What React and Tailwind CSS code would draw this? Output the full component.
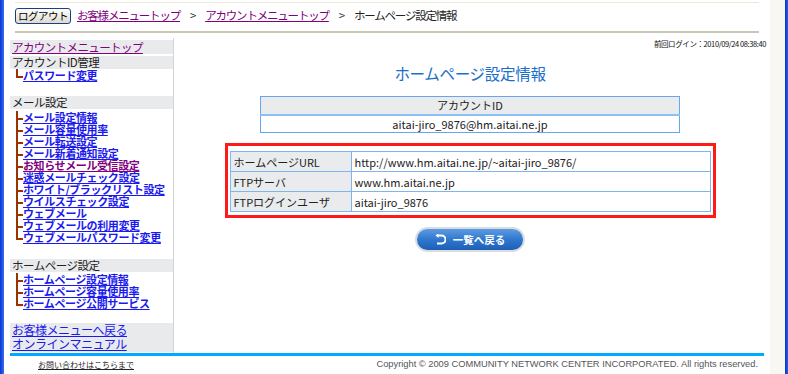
import React from 'react';

const mailItems = [
  { label: 'メール設定情報' },
  { label: 'メール容量使用率' },
  { label: 'メール転送設定' },
  { label: 'メール新着通知設定' },
  { label: 'お知らせメール受信設定', visited: true },
  { label: '迷惑メールチェック設定' },
  { label: 'ホワイト/ブラックリスト設定' },
  { label: 'ウイルスチェック設定' },
  { label: 'ウェブメール' },
  { label: 'ウェブメールの利用変更' },
  { label: 'ウェブメールパスワード変更' },
];

const homeItems = [
  { label: 'ホームページ設定情報' },
  { label: 'ホームページ容量使用率' },
  { label: 'ホームページ公開サービス' },
];

const infoRows = [
  ['ホームページURL', 'http://www.hm.aitai.ne.jp/~aitai-jiro_9876/'],
  ['FTPサーバ', 'www.hm.aitai.ne.jp'],
  ['FTPログインユーザ', 'aitai-jiro_9876'],
];

// tree connector glyph in front of each menu link
function Branch({ last }) {
  return (
    <svg width="12" height="12" viewBox="0 0 12 12" className="shrink-0">
      <rect x="5" y="0" width="2" height={last ? 9 : 12} fill="#993300" />
      <rect x="5" y="7" width="7" height="2" fill="#993300" />
    </svg>
  );
}

function MenuLink({ label, visited, last }) {
  return (
    <div className="flex items-center h-[12px] pl-[1px] overflow-visible">
      <Branch last={last} />
      <span
        className={`text-[11px] leading-[12px] font-bold underline tracking-[-0.4px] ${
          visited ? 'text-[#800080]' : 'text-[#1a1aee]'
        }`}
      >
        {label}
      </span>
    </div>
  );
}

function SectionHead({ children }) {
  return (
    <div className="h-[13px] bg-[#e9eaeb] text-[11.5px] leading-[13px] text-[#222] tracking-[-0.5px] pl-[2px]">
      {children}
    </div>
  );
}

export default function App() {
  return (
    <div
      className="w-[788px] h-[374px] flex bg-white overflow-hidden text-[#222]"
      style={{ fontFamily: '"Noto Sans CJK JP", "Noto Sans", sans-serif' }}
    >
      {/* window left edge */}
      <div className="w-[4px] bg-gradient-to-r from-[#0831d9] to-[#3a6ee8]" />

      <div className="flex-1 flex flex-col">
        {/* top bar */}
        <header className="mx-[11px] mt-[2px] h-[31px] border-t border-[#ece9d8] border-b-2 border-b-[#c9c6b6] flex items-center gap-[6px] pb-[2px]">
          <button className="w-[56px] h-[16px] rounded-[3px] border border-[#1c3f80] bg-gradient-to-b from-white to-[#dcdad0] text-[10.5px] leading-[14px] tracking-[-0.5px] text-black">
            ログアウト
          </button>
          <div className="flex items-center text-[11.5px] tracking-[-1.2px] gap-[10px]">
            <span className="text-[#800080] underline">お客様メニュートップ</span>
            <span className="text-[#333]">&gt;</span>
            <span className="text-[#800080] underline">アカウントメニュートップ</span>
            <span className="text-[#333]">&gt;</span>
            <span className="text-[#222]">ホームページ設定情報</span>
          </div>
        </header>

        {/* body */}
        <div className="flex flex-1 mt-[5px]">
          <aside className="w-[164px] ml-[6px] border-r border-[#d4d4d4] flex flex-col pt-[2px]">
            <div className="h-[14px] bg-[#e9eaeb] text-[11.5px] leading-[14px] text-[#800080] underline tracking-[-0.6px] pl-[2px]">
              アカウントメニュートップ
            </div>
            <div className="h-[2px]" />
            <SectionHead>アカウントID管理</SectionHead>
            <MenuLink label="パスワード変更" last />
            <div className="h-[15px]" />
            <SectionHead>メール設定</SectionHead>
            <div className="h-[2px]" />
            {mailItems.map((it, i) => (
              <MenuLink key={it.label} {...it} last={i === mailItems.length - 1} />
            ))}
            <div className="h-[16px]" />
            <SectionHead>ホームページ設定</SectionHead>
            <div className="h-[1px]" />
            {homeItems.map((it, i) => (
              <MenuLink key={it.label} {...it} last={i === homeItems.length - 1} />
            ))}
            <div className="h-[14px]" />
            <div className="bg-[#e9eaeb] text-[12px] leading-[14px] text-[#1a1aee] tracking-[-0.5px] pl-[2px] pb-[1px]">
              <div className="underline">お客様メニューへ戻る</div>
              <div className="underline">オンラインマニュアル</div>
            </div>
          </aside>

          <main className="flex-1 flex flex-col items-center pr-[4px]">
            <div className="self-end text-[7.5px] leading-[10px] text-[#111] mt-[1px] tracking-[-0.4px]">
              前回ログイン：2010/09/24 08:38:40
            </div>
            <h1 className="mt-[14px] text-[15.5px] leading-[20px] text-[#1a6fcb] tracking-[-0.3px]">
              ホームページ設定情報
            </h1>

            <table className="mt-[13px] w-[420px] border border-[#66a6ee] text-[11px] border-collapse">
              <tbody>
                <tr>
                  <td className="h-[18px] bg-[#e9ebec] text-center border-b-2 border-[#8cc0f4] leading-[16px]">
                    アカウントID
                  </td>
                </tr>
                <tr>
                  <td className="h-[18px] text-center leading-[16px]">aitai-jiro_9876@hm.aitai.ne.jp</td>
                </tr>
              </tbody>
            </table>

            <div className="mt-[10px] w-[491px] border-[3px] border-[#ff1a1a] px-[2px] pt-[5px] pb-[3px]">
              <table className="w-full border border-[#7fb4f2] border-collapse text-[11px]">
                <tbody>
                  {infoRows.map(([k, v]) => (
                    <tr key={k} className="h-[20px]">
                      <td className="w-[121px] bg-[#e9ebec] border border-[#7fb4f2] pl-[3px] leading-[18px]">{k}</td>
                      <td className="border border-[#7fb4f2] pl-[3px] leading-[18px]">{v}</td>
                    </tr>
                  ))}
                </tbody>
              </table>
            </div>

            <button className="mt-[9px] w-[110px] h-[25px] rounded-full border-2 border-[#d8dde2] bg-gradient-to-b from-[#5c9be0] via-[#2f78cf] to-[#1f5fb5] text-white text-[10.5px] font-bold flex items-center justify-center gap-[7px]">
              <svg width="11" height="11" viewBox="0 0 11 11">
                <path d="M2 1.5 H6.5 A3.5 3.5 0 0 1 6.5 9.5 H2" fill="none" stroke="white" strokeWidth="2" />
                <path d="M0.5 1.5 L3.5 -1 L3.5 4 Z" fill="white" />
              </svg>
              一覧へ戻る
            </button>
          </main>
        </div>

        {/* footer */}
        <footer className="mx-[6px] border-t-[3px] border-[#00aaff] h-[21px] flex items-center justify-between pl-[28px] pr-[6px]">
          <span className="text-[8px] underline text-[#222]">お問い合わせはこちらまで</span>
          <span className="text-[9.3px] text-[#555]" style={{ fontFamily: '"Liberation Sans", sans-serif' }}>
            Copyright © 2009 COMMUNITY NETWORK CENTER INCORPORATED. All rights reserved.
          </span>
        </footer>
      </div>

      {/* scrollbar strip and right edge */}
      <div className="w-[15px] bg-[#f8f7f2]" />
      <div className="w-[3px] bg-gradient-to-r from-[#0a2fcf] to-[#2a5de0]" />
    </div>
  );
}
